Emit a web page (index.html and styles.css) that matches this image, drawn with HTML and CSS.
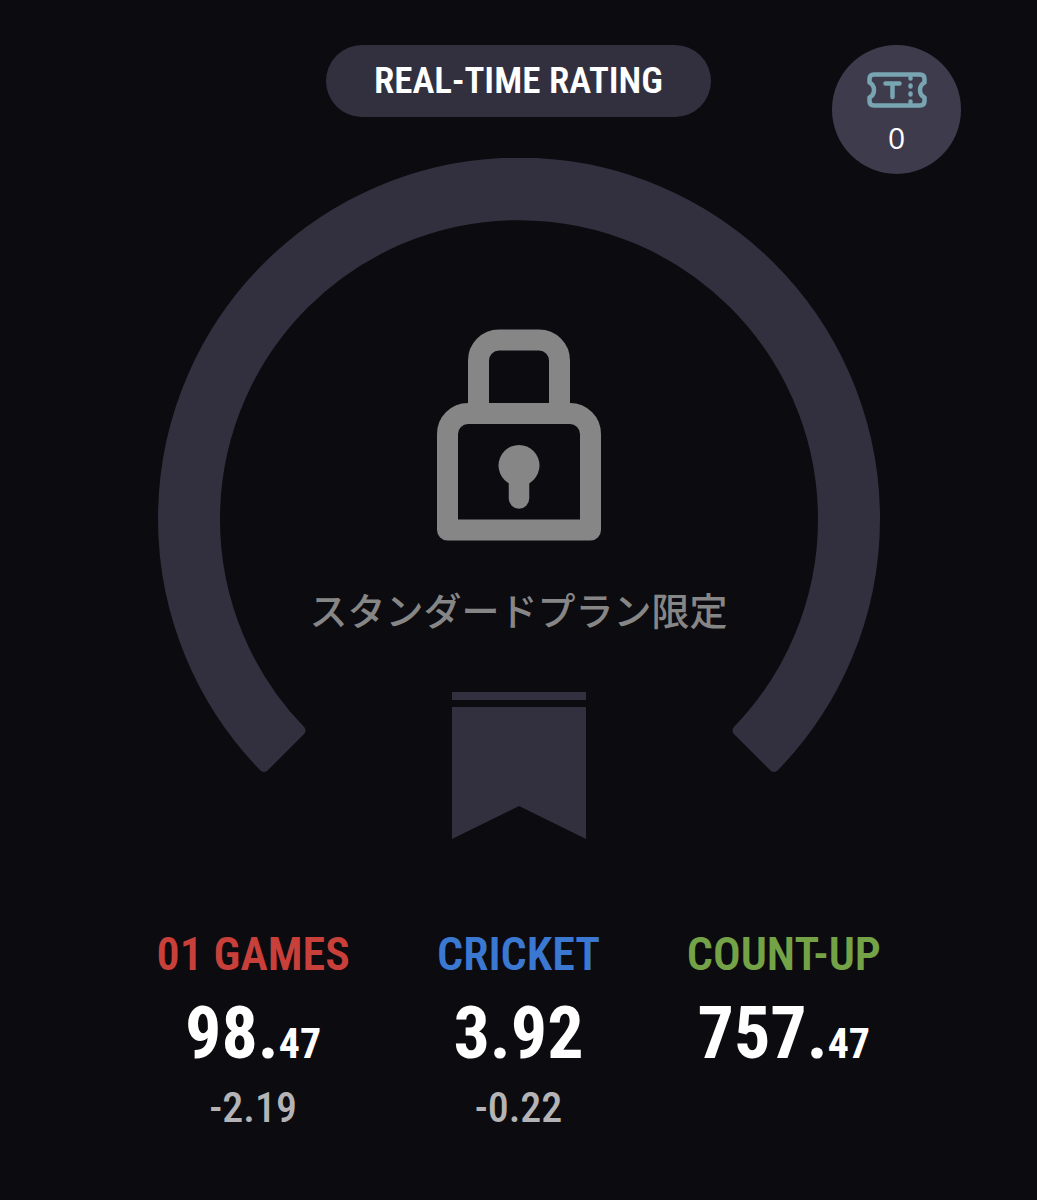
FILE: index.html
```html
<!DOCTYPE html>
<html lang="ja">
<head>
  <meta charset="UTF-8">
  <meta name="viewport" content="width=device-width, initial-scale=1">
  <title>Real-Time Rating</title>
  <link rel="stylesheet" href="styles.css">
</head>
<body>

  <main class="rating-page">
    <h1 class="rating-title">REAL-TIME RATING</h1>

    <button type="button" class="ticket-badge">
      <svg class="ticket-icon" viewBox="0 0 60 36" aria-hidden="true">
        <path d="M7 2.500H53Q57.500 2.500 57.500 7V10.500C51.500 13.500 51.500 22.500 57.500 25.500V29Q57.500 33.500 53 33.500H7Q2.500 33.500 2.500 29V25.500C8.500 22.500 8.500 13.500 2.500 10.500V7Q2.500 2.500 7 2.500Z" fill="none" stroke="#78a5b1" stroke-width="4.500" stroke-linejoin="round"/>
        <path d="M18.500 11.500H32.500M25.500 11.500V25" fill="none" stroke="#78a5b1" stroke-width="4.500" stroke-linecap="round"/>
        <path d="M43.500 6V6.500M43.500 13.500V14.500M43.500 21.500V22.500M43.500 29.500V30" fill="none" stroke="#78a5b1" stroke-width="4.500" stroke-linecap="round"/>
      </svg>
      <span class="ticket-count">0</span>
    </button>

    <section class="gauge">
      <svg class="gauge-ring" viewBox="0 0 722 682" aria-hidden="true">
        <path class="ring" d="M106 609A356 356 0 1 1 616 609L579.500 572.500A304 304 0 1 0 142.500 572.500Z"/>
        <!-- ribbon -->
        <path class="ribbon" d="M294 534H428V542H294ZM294 549H428V681L361 648L294 681Z"/>
      </svg>
      <div class="gauge-lock">
        <svg class="lock-icon" viewBox="0 0 164 212" aria-hidden="true">
          <path d="M41.500 84V31.500A20.500 20.500 0 0 1 62 11H102A20.500 20.500 0 0 1 122.500 31.500V84" fill="none" stroke="#868686" stroke-width="21"/>
          <path d="M10.500 201V105A20.500 20.500 0 0 1 31 84.500H133A20.500 20.500 0 0 1 153.500 105V201Z" fill="none" stroke="#868686" stroke-width="21" stroke-linejoin="round"/>
          <circle cx="82" cy="136.500" r="20.500" fill="#868686"/>
          <path d="M82 140V169.500" stroke="#868686" stroke-width="20.500" stroke-linecap="round"/>
        </svg>
        <p class="lock-text">スタンダードプラン限定</p>
      </div>
    </section>

    <dl class="stats">
      <div class="stat stat-games">
        <dt>01 GAMES</dt>
        <dd class="stat-value">98.<small>47</small></dd>
        <dd class="stat-diff">-2.19</dd>
      </div>
      <div class="stat stat-cricket">
        <dt>CRICKET</dt>
        <dd class="stat-value">3.92</dd>
        <dd class="stat-diff">-0.22</dd>
      </div>
      <div class="stat stat-countup">
        <dt>COUNT-UP</dt>
        <dd class="stat-value">757.<small>47</small></dd>
      </div>
    </dl>
  </main>

</body>
</html>
```
FILE: styles.css
```css
* {
  box-sizing: border-box;
}

body {
  margin: 0;
  min-height: 100vh;
  background-color: #0c0b10;
  color: #fff;
  font-family: "DIN Condensed", "Roboto Condensed", "Liberation Sans Narrow", sans-serif;
}

.rating-page {
  position: relative;
  display: flex;
  flex-direction: column;
  align-items: center;
  padding: 45px 0 60px;
}

.rating-title {
  margin: 0;
  padding: 0 48px;
  border-radius: 36px;
  background-color: #32303e;
  font-size: 37px;
  font-weight: 600;
  line-height: 72px;
}

.ticket-badge {
  position: absolute;
  top: 45px;
  right: 76px;
  display: flex;
  flex-direction: column;
  align-items: center;
  width: 129px;
  height: 129px;
  padding: 27px 0 0;
  border: none;
  border-radius: 50%;
  background-color: #3e3b4d;
  color: #fff;
  cursor: pointer;
}

.ticket-icon {
  width: 60px;
  height: 36px;
}

.ticket-count {
  margin-top: 12px;
  font-family: "Open Sans", sans-serif;
  font-size: 30px;
  line-height: 36px;
}

.gauge {
  display: grid;
  width: 70%;
  max-width: 722px;
  margin-top: 41px;
}

.gauge-ring,
.gauge-lock {
  grid-area: 1 / 1;
}

.gauge-ring {
  width: 100%;
}

.ring {
  fill: #32303e;
  stroke: #32303e;
  stroke-width: 10;
  stroke-linejoin: round;
}

.ribbon {
  fill: #32303e;
}

.gauge-lock {
  display: flex;
  flex-direction: column;
  align-items: center;
  padding-top: 171px;
}

.lock-icon {
  width: 164px;
  height: 212px;
}

.lock-text {
  margin: 40px 0 0;
  color: #868686;
  font-family: "Noto Sans CJK JP", sans-serif;
  font-size: 38px;
  font-weight: 500;
  line-height: 56px;
}

.stats {
  display: grid;
  grid-template-columns: repeat(3, 1fr);
  width: 77%;
  max-width: 796px;
  margin: 84px 0 0;
  text-align: center;
}

.stat dt {
  font-size: 46px;
  font-weight: 600;
  line-height: 60px;
}

.stat dd {
  margin: 0;
}

.stat-games dt {
  color: #c9403a;
}

.stat-cricket dt {
  color: #3b78d1;
}

.stat-countup dt {
  color: #74a246;
}

.stat-value {
  font-size: 72px;
  font-weight: 700;
  line-height: 100px;
}

.stat-value small {
  font-size: 42px;
  line-height: 1;
}

.stat-diff {
  color: #b4b4b6;
  font-size: 42px;
  font-weight: 500;
  line-height: 48px;
}
```
